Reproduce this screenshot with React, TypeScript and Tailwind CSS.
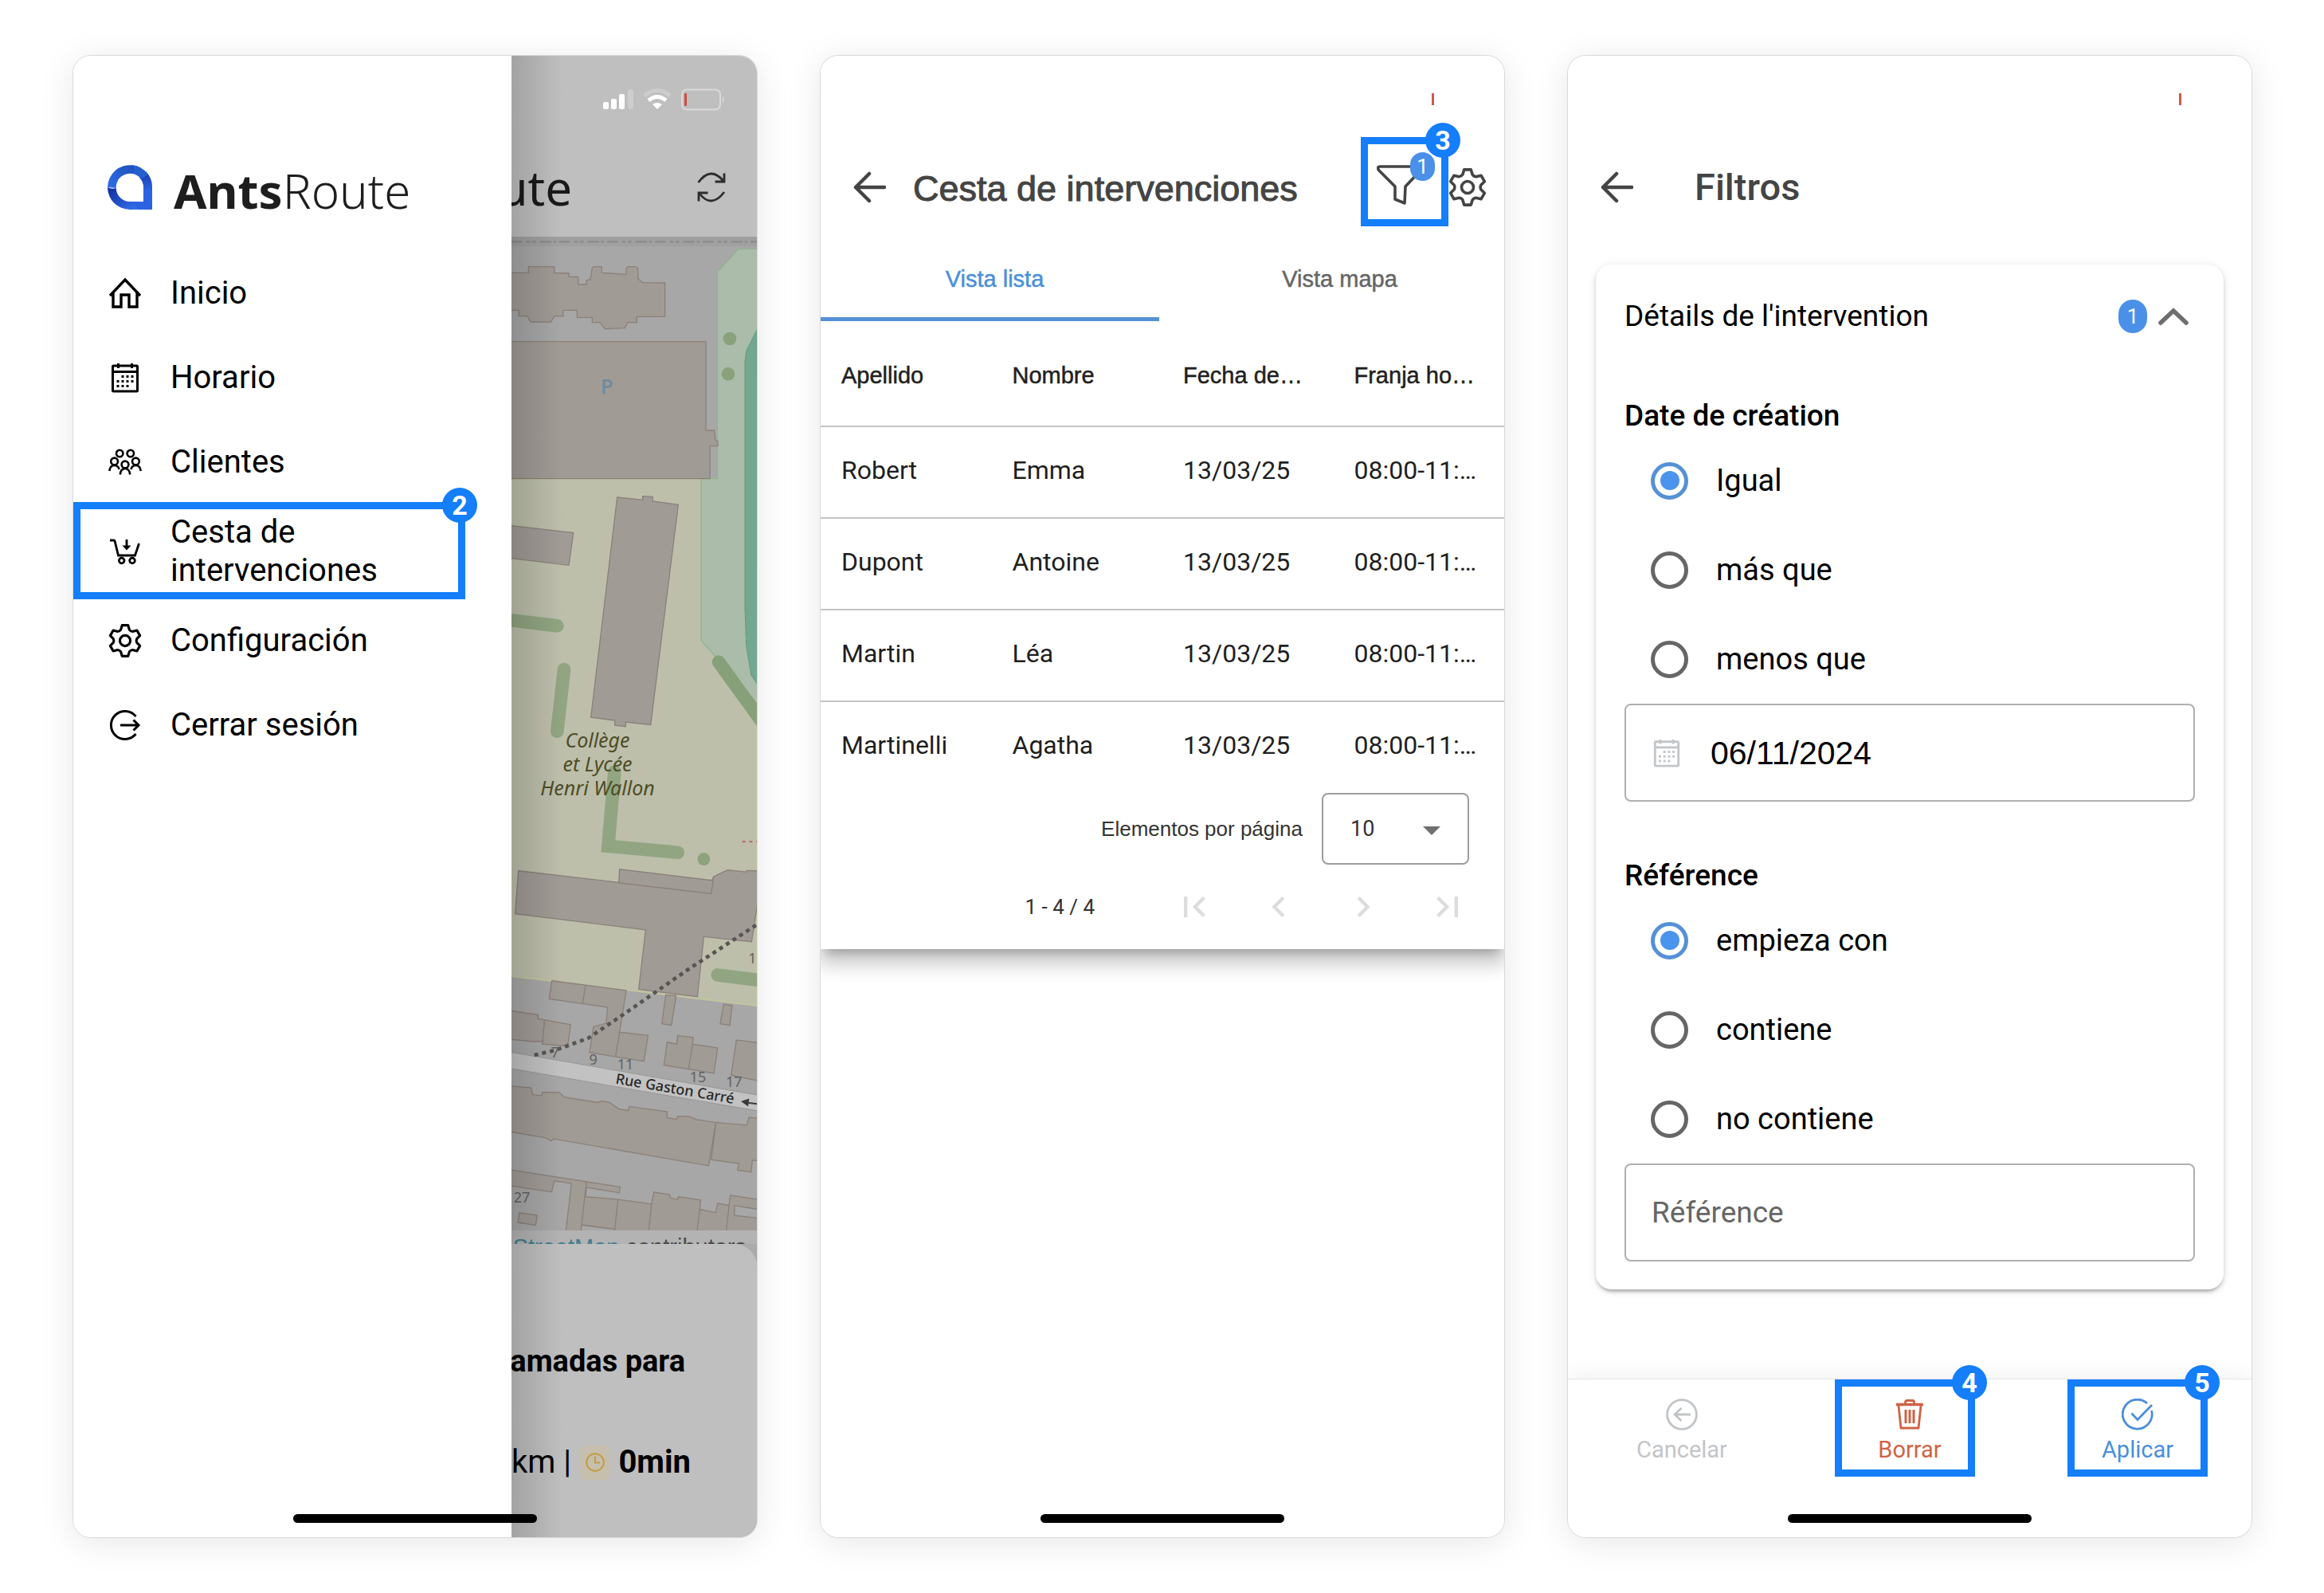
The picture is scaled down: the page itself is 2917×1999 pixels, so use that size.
// App.tsx
import type { ReactNode } from "react";
import clsx from "clsx";

const rows = [
  { apellido: "Robert", nombre: "Emma", fecha: "13/03/25", franja: "08:00-11:…" },
  { apellido: "Dupont", nombre: "Antoine", fecha: "13/03/25", franja: "08:00-11:…" },
  { apellido: "Martin", nombre: "Léa", fecha: "13/03/25", franja: "08:00-11:…" },
  { apellido: "Martinelli", nombre: "Agatha", fecha: "13/03/25", franja: "08:00-11:…" },
];

// Six-toothed gear outline centred on (24, 24)
const gearPath = (() => {
  const point = (radius: number, degrees: number) => {
    const a = (degrees * Math.PI) / 180;
    return `${(24 + radius * Math.cos(a)).toFixed(1)} ${(24 + radius * Math.sin(a)).toFixed(1)}`;
  };
  const teeth = [0, 1, 2, 3, 4, 5].map((i) => {
    const a = i * 60 - 90;
    return `${point(17, a - 21)}L${point(22.5, a - 11)}L${point(22.5, a + 11)}L${point(17, a + 21)}Q${point(15.5, a + 30)} `;
  });
  return `M${teeth.join("")}${point(17, -111)}Z`;
})();

function GearIcon({ className, width = 4 }: { className: string; width?: number }) {
  return (
    <svg viewBox="0 0 48 48" className={className} fill="none" stroke="currentColor" strokeWidth={width} strokeLinejoin="round">
      <path d={gearPath} />
      <circle cx="24" cy="24" r="7.5" />
    </svg>
  );
}

function HomeIcon() {
  return (
    <svg viewBox="0 0 40 40" className="w-10 h-10" fill="none" stroke="currentColor" strokeWidth="3.4">
      <path d="M1 23L20 3l19 20" />
      <path d="M5 19v18h10V22h10v15h10V19" />
    </svg>
  );
}

function CalendarIcon({ className }: { className: string }) {
  return (
    <svg viewBox="0 0 40 40" className={className} fill="none" stroke="currentColor">
      <rect x="4.5" y="5" width="31" height="32" rx="1" strokeWidth="3" />
      <path d="M4 12.5h32" strokeWidth="3" />
      <path d="M11.5 2v6M28.5 2v6" strokeWidth="3" />
      <path d="M15.5 18.5h15M9.5 24.5h21M9.5 30.5h15" strokeWidth="3.2" strokeDasharray="3 3" />
    </svg>
  );
}

function PeopleIcon() {
  return (
    <svg viewBox="0 0 42 34" className="w-[42px] h-[34px]" fill="none" stroke="currentColor" strokeWidth="2.6">
      <circle cx="14.2" cy="6" r="4.2" />
      <circle cx="27.8" cy="6" r="4.2" />
      <circle cx="7.6" cy="16" r="4.4" />
      <circle cx="34.4" cy="16" r="4.4" />
      <circle cx="21" cy="20" r="4.4" />
      <path d="M1.3 28c.5-4.5 2.7-7 6.3-7 3 0 5.2 1.8 6 5" />
      <path d="M40.7 28c-.5-4.5-2.7-7-6.3-7-3 0-5.2 1.8-6 5" />
      <path d="M14.8 32.5c.5-5 2.8-7.5 6.2-7.5s5.7 2.5 6.2 7.5" />
    </svg>
  );
}

function CartIcon() {
  return (
    <svg viewBox="0 0 40 40" className="w-10 h-10" fill="none" stroke="currentColor" strokeWidth="2.8">
      <path d="M1 6h4.5c1 0 1.5.5 1.7 1.4L11.5 25h21L37.5 10" />
      <circle cx="15.7" cy="31.5" r="3.3" />
      <circle cx="29" cy="31.5" r="3.3" />
      <path d="M22 5v9" />
      <path d="M16.5 12.5h11L22 18.5z" fill="currentColor" stroke="none" />
    </svg>
  );
}

function LogoutIcon() {
  return (
    <svg viewBox="0 0 40 40" className="w-10 h-10" fill="none" stroke="currentColor" strokeWidth="3">
      <path d="M33.5 9A17.5 17.5 0 1 0 33.5 31" />
      <path d="M14 20h23M30.5 13.5L37 20l-6.5 6.5" />
    </svg>
  );
}

function BackArrow() {
  return (
    <svg viewBox="0 0 42 40" className="w-[42px] h-10" fill="none" stroke="currentColor" strokeWidth="4.5">
      <path d="M40 20H4M21 3L4 20l17 17" strokeLinecap="round" strokeLinejoin="round" />
    </svg>
  );
}

function LogoMark() {
  return (
    <svg viewBox="0 0 56 56" className="w-14 h-14">
      <defs>
        <linearGradient id="markTop" x1="0" y1="1" x2="1" y2="0">
          <stop offset="0" stopColor="#2f6fe8" />
          <stop offset="1" stopColor="#1f50b8" />
        </linearGradient>
        <linearGradient id="markSide" x1="0" y1="0" x2="0" y2="1">
          <stop offset="0" stopColor="#173aa6" />
          <stop offset="0.5" stopColor="#2a62e2" />
          <stop offset="1" stopColor="#2a62e2" />
        </linearGradient>
        <linearGradient id="markBottom" x1="0" y1="0" x2="1" y2="1">
          <stop offset="0" stopColor="#0d2a9c" />
          <stop offset="1" stopColor="#3775ee" />
        </linearGradient>
      </defs>
      <path d="M56 56H33l-3-10h15V28A17 17 0 0 0 40 16l8-8a28 28 0 0 1 8 20z" fill="url(#markSide)" />
      <path d="M30 0A28 28 0 0 1 51 12l-9 5.5A17 17 0 0 0 31 11z" fill="#2560cf" />
      <path d="M0 28A28 28 0 0 1 32 0.5Q36 6 31 11A17.3 17.3 0 0 0 10.7 29z" fill="url(#markTop)" />
      <path d="M0 28q5 3 10.7 1A17.3 17.3 0 0 0 28 46h5q1 7 6 10H28A28 28 0 0 1 0 28z" fill="url(#markBottom)" />
    </svg>
  );
}

function StatusIcons() {
  return (
    <svg viewBox="0 0 154 28" className="w-[154px] h-7" fill="none">
      <rect x="0" y="17" width="7" height="9" rx="2" fill="#fff" />
      <rect x="10" y="13" width="7" height="13" rx="2" fill="#fff" />
      <rect x="20" y="7" width="7" height="19" rx="2" fill="#fff" />
      <rect x="31" y="1" width="7" height="25" rx="2" fill="#cdcdcd" />
      <path d="M52 9q16-13 32 0" stroke="#cdcdcd" strokeWidth="5" />
      <path d="M57 15q11-9 22 0" stroke="#fff" strokeWidth="5" />
      <path d="M62 20q6-4 12 0l-6 6z" fill="#fff" />
      <rect x="99" y="1.5" width="48" height="25" rx="6" stroke="#dadada" strokeWidth="2" />
      <path d="M150 10q4 4 0 8z" fill="#dadada" />
      <rect x="102" y="6" width="3" height="16" rx="1" fill="#cf4a40" />
    </svg>
  );
}

function RefreshIcon() {
  return (
    <svg viewBox="0 0 36 38" className="w-9 h-[38px]" fill="none" stroke="#2d2d2d" strokeWidth="2.8">
      <path d="M1.5 13Q17-8 33 11M34 1.5V12H22.5" />
      <path d="M34 25Q18 46 3 27M2 36.5V26H13.5" />
    </svg>
  );
}

// Numbered blue frame drawn over a control
function Highlight({ n, className }: { n: number; className: string }) {
  return (
    <span className={clsx("absolute border-[9px] border-[#147efb]", className)}>
      <span className="absolute -top-[27px] -right-6 w-11 h-11 rounded-full bg-[#147efb] flex items-center justify-center text-white text-[34px] leading-none font-bold font-[Roboto,sans-serif]">
        {n}
      </span>
    </span>
  );
}

function HomeIndicator() {
  return <div className="absolute bottom-[18px] left-1/2 -translate-x-1/2 w-[306px] h-[11px] rounded-full bg-black" />;
}

function Phone({ children }: { children: ReactNode }) {
  return (
    <section className="relative flex-1 min-w-0 flex rounded-[22px] shadow-[0_0_0_1px_#d9d9d9,0_6px_44px_rgba(0,0,0,0.1)]">
      <div className="flex-1 min-w-0 flex rounded-[22px] overflow-hidden bg-white">{children}</div>
      <HomeIndicator />
    </section>
  );
}

function StatusTick() {
  return (
    <div className="h-[102px] pt-[47px] pr-[88px] flex justify-end">
      <div className="w-[3px] h-[15px] bg-[#cf5a4e]" />
    </div>
  );
}

function CityMap() {
  return (
    <svg viewBox="36 0 924 3741" className="w-full block bg-[#a7a7a7]" fontFamily="'Noto Sans', sans-serif">
      <rect x="36" y="0" width="924" height="36" fill="#a0a0a0" />
      <path d="M36 19H960" stroke="#8a8a8a" strokeWidth="7" strokeDasharray="40 16 14 8 14 14 44 8 10 12" />
      <path d="M36 911H960V2895L36 2784z" fill="#bdbfab" stroke="#c3c59c" strokeWidth="5" />
      <path d="M890 47H962V1759L750 1519V911H811V133z" fill="#abbcab" stroke="#8fb48f" strokeWidth="4" />
      <path d="M960 351L920 431L915 471V1400L920 1539L938 1649L962 1685z" fill="#74a78f" stroke="#5f9c86" strokeWidth="3" />
      <g fill="#8aa27b">
        <circle cx="858" cy="384" r="25" />
        <circle cx="852" cy="517" r="25" />
      </g>
      <g fill="#a19b96" stroke="#8b8079" strokeWidth="4">
        <path d="M30 136H100V113H197V136L252 138V151H287V180H318V164L333 161L340 118Q342 113 350 113H376V136L468 142V120Q470 113 480 113H500Q512 114 513 125V158L530 173L614 174V301H508V323H474L462 344L388 347L368 323H340V304H283V277H231V299H198L184 321H108L96 299H64V277H30z" />
        <path d="M30 395H768V729H799L804 766L813 770V788H783V911H30z" />
      </g>
      <text x="395" y="590" textAnchor="middle" fontSize="78" fontWeight="600" fill="#6f8da0">P</text>

      <g transform="translate(0 969)">
        <g fill="#a19b96" stroke="#8b8079" strokeWidth="4">
          <path d="M30 118L269 146L252 268L30 241z" />
          <path d="M434 12L530 22V8L568 10V27L664 40L560 868L466 858V875L425 870V852L335 840z" />
        </g>
        <g fill="none" stroke="#91a582" strokeWidth="50" strokeLinecap="round">
          <path d="M20 473L208 496" />
          <path d="M234 660L208 893" />
          <path d="M816 632L985 865" stroke="#86a179" />
          <path d="M424 1045L400 1325L662 1349" />
        </g>
        <circle cx="760" cy="1374" r="24" fill="#8ca37d" />
        <path d="M905 1308H960" stroke="#b8706a" strokeWidth="7" strokeDasharray="12 14" />
        <g fontSize="75" fontStyle="italic" textAnchor="middle" fill="#4d4d25">
          <text x="360" y="955">Collège</text>
          <text x="360" y="1045">et Lycée</text>
          <text x="360" y="1133">Henri Wallon</text>
        </g>
      </g>

      <g transform="translate(0 2349)">
        <g fill="#a19b96" stroke="#8b8079" strokeWidth="4">
          <path d="M62 38L440 82L443 32L790 74L797 60L850 35L918 42L922 37L964 38V150L940 305L760 286L736 512L515 484L541 260L50 200z" />
          <path d="M437 83L788 124L797 60" fill="none" />
          <path d="M188 452L468 488L443 645L550 658L535 755L330 722L345 625L392 612L398 552L178 520z" />
          <path d="M315 470L303 540M443 645L428 735" />
          <path d="M30 564L136 580V595L259 617L247 698L152 690L155 680H110L30 672z" />
          <path d="M160 603L152 690" />
          <path d="M617 505L656 508L638 620L602 614z" />
          <path d="M835 540L867 545L858 620L822 614z" />
          <path d="M622 683L658 690L662 658L720 665L718 690L812 705L798 800L610 770z" />
          <path d="M718 690L703 783" />
          <path d="M883 675L964 685V828L863 808z" />
          <path d="M30 848L110 855L115 880L150 885L152 872H215L235 890L360 910L375 905L405 910L440 935L475 940L480 925L622 945V968L658 973L662 962H700L735 975L806 985L778 1148L195 1047L185 1055L165 1043L30 1020z" />
          <path d="M806 985L922 996L930 966L964 970V1130L943 1127L938 1172L887 1165L892 1140L788 1125z" />
          <path d="M30 1163L445 1228L442 1250L318 1230L315 1265L437 1275L563 1292L572 1248L630 1256L635 1270L660 1275L665 1265L748 1277L745 1312L805 1325L812 1290L855 1297L860 1260L964 1275V1400H240L262 1215L197 1205L187 1247L30 1223z" />
          <path d="M318 1210L300 1370L425 1387L437 1275M563 1292L553 1391M745 1312L735 1391M855 1297L845 1391" fill="none" />
          <path d="M875 1298L964 1312V1345L875 1335zM300 1372L425 1387V1400H298z" fill="#a7a7a7" />
          <path d="M66 1325L133 1335L127 1372L60 1362z" />
        </g>
        <path d="M812 430L985 452" stroke="#91a582" strokeWidth="50" strokeLinecap="round" />
        <path d="M30 720L964 882V942L30 782z" fill="#c2c2c2" stroke="#979797" strokeWidth="3" />
        <path d="M122 732L205 712L325 668L470 570L700 410L964 238" fill="none" stroke="#575553" strokeWidth="14" strokeDasharray="15 15" />
        <g fontSize="54" fill="#626262" textAnchor="middle">
          <text x="200" y="740">7</text>
          <text x="344" y="768">9</text>
          <text x="465" y="786">11</text>
          <text x="738" y="833">15</text>
          <text x="874" y="853">17</text>
          <text x="75" y="1287">27</text>
          <text x="943" y="388">1</text>
        </g>
        <text transform="translate(426 838) rotate(9.8)" fontSize="54" fontWeight="500" fill="#262626">Rue Gaston Carré</text>
        <path d="M925 911L964 916" stroke="#3a3a3a" strokeWidth="6" />
        <path d="M900 906L931 895L927 925z" fill="#3a3a3a" />
      </g>
    </svg>
  );
}

const menu = [
  { label: "Inicio", icon: <HomeIcon /> },
  { label: "Horario", icon: <CalendarIcon className="w-10 h-10" /> },
  { label: "Clientes", icon: <PeopleIcon /> },
  { label: "Cesta de intervenciones", icon: <CartIcon />, marker: 2 },
  { label: "Configuración", icon: <GearIcon className="w-[42px] h-[42px]" width={3.6} /> },
  { label: "Cerrar sesión", icon: <LogoutIcon /> },
];

function MenuScreen() {
  return (
    <Phone>
      <aside className="w-[64.1%] shrink-0 bg-white">
        <div className="pt-[137px] pl-[43px] h-[245px] flex items-start">
          <LogoMark />
          <div className="ml-[27px] text-[60px] leading-[64px] text-[#1e1e1e] font-['Noto_Sans',sans-serif]">
            <span className="font-bold">Ants</span>
            <span className="font-light">Route</span>
          </div>
        </div>
        <nav>
          {menu.map((item) => (
            <a
              key={item.label}
              href="#"
              className="relative min-h-[106px] py-[11px] pl-11 flex items-center text-[40px] leading-[48px] text-black"
            >
              <span className="w-[42px] flex justify-center shrink-0">{item.icon}</span>
              <span className="ml-9 max-w-[300px]">{item.label}</span>
              {item.marker && <Highlight n={item.marker} className="-top-[3px] -bottom-px left-0 right-[58px]" />}
            </a>
          ))}
        </nav>
      </aside>

      <div className="relative flex-1 min-w-0 flex flex-col overflow-hidden bg-[#bfbfbf]">
        <div className="h-[102px] pt-[41px] pr-[39px] flex justify-end">
          <StatusIcons />
        </div>
        <div className="h-[125px] pr-[39px] flex items-center justify-end">
          <span className="mr-[157px] text-[60px] leading-[60px] text-[#1a1a1a] font-['Noto_Sans',sans-serif]">Route</span>
          <button type="button" aria-label="Actualizar">
            <RefreshIcon />
          </button>
        </div>
        <CityMap />
        <div className="h-[17px] pt-[5px] pr-[13px] flex justify-end overflow-hidden whitespace-nowrap bg-[#b3b3b3] text-[29px] leading-8 text-[#4a4a4a] font-['Liberation_Sans',sans-serif]">
          <span>
            <a href="#" className="text-[#417d92]">StreetMap</a> contributors
          </span>
        </div>
        <div className="bg-[#aaaaaa] flex-1 flex">
          <div className="flex-1 min-w-0 rounded-tr-[28px] bg-[#bfbfbf] pt-[125px] text-black whitespace-nowrap">
            <p className="pr-[90px] flex justify-end text-[38px] leading-[44px] font-bold">programadas para</p>
            <p className="mt-[83px] pr-[83px] flex justify-end items-center text-[40px] leading-[44px]">
              km |
              <span className="w-[43px] h-[43px] ml-2.5 mr-2.5 rounded-lg bg-[#c6bfae] flex items-center justify-center">
                <svg viewBox="0 0 24 24" className="w-6 h-6" fill="none" stroke="#c59b42" strokeWidth="2">
                  <circle cx="12" cy="12" r="10.8" />
                  <path d="M12 4.5V12.5H18" />
                </svg>
              </span>
              <b>0min</b>
            </p>
          </div>
        </div>
        <div className="absolute inset-y-0 left-0 w-16 bg-linear-to-r from-black/15 to-transparent" />
      </div>
    </Phone>
  );
}

function PagerButton({ label, d }: { label: string; d: string }) {
  return (
    <button type="button" disabled aria-label={label} className="w-[106px] h-[106px] flex items-center justify-center">
      <svg viewBox="0 0 24 24" className="w-[52px] h-[52px]" fill="#dcdcdc">
        <path d={d} />
      </svg>
    </button>
  );
}

function ListScreen() {
  return (
    <Phone>
      <div className="flex-1 min-w-0 font-['Liberation_Sans',sans-serif]">
        <StatusTick />
        <header className="h-[126px] pl-10 pr-[22px] flex items-center text-[#444]">
          <button type="button" aria-label="Volver">
            <BackArrow />
          </button>
          <h1 className="ml-[34px] pt-1 text-[45px] leading-[52px] [-webkit-text-stroke:1px_#444]">Cesta de intervenciones</h1>
          <button
            type="button"
            aria-label="Filtrar"
            className="relative self-start ml-auto w-[110px] h-28 pt-2 pr-3 flex items-center justify-center"
          >
            <svg viewBox="0 0 58 50" className="w-[58px] h-[50px]" fill="none" stroke="currentColor" strokeWidth="3.6" strokeLinejoin="round">
              <path d="M4 2h49c3 0 4 3 2 5L36 27l-1 21-12-5V27L3 7C1 5 1 2 4 2z" />
            </svg>
            <span className="absolute right-[17px] top-[19px] w-[31px] h-9 rounded-full bg-[#4a90e8] text-white text-[26px] leading-9 font-[Roboto,sans-serif]">
              1
            </span>
            <Highlight n={3} className="inset-0" />
          </button>
          <button type="button" aria-label="Ajustes">
            <GearIcon className="w-12 h-[50px]" width={3.6} />
          </button>
        </header>

        <div className="bg-white shadow-[0_11px_11px_-7px_rgba(0,0,0,0.2),0_18px_22px_2px_rgba(0,0,0,0.14),0_7px_31px_4px_rgba(0,0,0,0.12)] [clip-path:inset(0_0_-80px_0)]">
          <div role="tablist" className="h-[105px] flex text-[29px]">
            <button
              type="button"
              role="tab"
              aria-selected
              className="flex-1 pt-1.5 pl-3 border-b-[5px] border-[#5591d6] text-[#4a90d9] [-webkit-text-stroke:0.5px_#4a90d9]"
            >
              Vista lista
            </button>
            <button
              type="button"
              role="tab"
              aria-selected={false}
              className="flex-1 pt-1.5 pl-5 border-b-[5px] border-transparent text-[#666] [-webkit-text-stroke:0.5px_#666]"
            >
              Vista mapa
            </button>
          </div>
          <table className="w-full table-fixed text-left whitespace-nowrap text-[#1f1f1f]">
            <thead>
              <tr className="h-[132px] text-[29px] border-b-2 border-[#c4c4c4]">
                {["Apellido", "Nombre", "Fecha de…", "Franja ho…"].map((title) => (
                  <th key={title} className="pt-1.5 pl-[26px] font-normal [-webkit-text-stroke:0.5px_#1f1f1f]">
                    {title}
                  </th>
                ))}
              </tr>
            </thead>
            <tbody className="text-[32px] font-[Roboto,sans-serif]">
              {rows.map((row, i) => (
                <tr key={row.apellido} className={clsx("h-[115px]", i < rows.length - 1 && "border-b-2 border-[#c4c4c4]")}>
                  <td className="pb-1.5 pl-[26px]">{row.apellido}</td>
                  <td className="pb-1.5 pl-[26px]">{row.nombre}</td>
                  <td className="pb-1.5 pl-[26px]">{row.fecha}</td>
                  <td className="pb-1.5 pl-[26px]">{row.franja}</td>
                </tr>
              ))}
            </tbody>
          </table>
          <div className="pr-[44px] flex items-center justify-end text-[26px] text-[#333]">
            <label htmlFor="page-size">Elementos por página</label>
            <div className="relative ml-6">
              <select
                id="page-size"
                defaultValue="10"
                className="appearance-none block w-[185px] h-[90px] pl-[34px] border-2 border-[#9e9e9e] rounded-lg bg-white text-[27px] font-[Roboto,sans-serif]"
              >
                <option>10</option>
              </select>
              <svg viewBox="0 0 22 11" className="absolute right-9 top-[42px] w-[22px] h-[11px] pointer-events-none" fill="#707070">
                <path d="M0 0h22L11 11z" />
              </svg>
            </div>
          </div>
          <div className="pr-[18px] flex items-center justify-end text-[26px] text-[#333]">
            <span className="mr-[72px] font-[Roboto,sans-serif]">1 - 4 / 4</span>
            <PagerButton label="Primera página" d="M18.41 16.59L13.82 12l4.59-4.59L17 6l-6 6 6 6zM6 6h2v12H6z" />
            <PagerButton label="Página anterior" d="M15.41 7.41L14 6l-6 6 6 6 1.41-1.41L10.83 12z" />
            <PagerButton label="Página siguiente" d="M10 6L8.59 7.41 13.17 12l-4.58 4.59L10 18l6-6z" />
            <PagerButton label="Última página" d="M5.59 7.41L10.18 12l-4.59 4.59L7 18l6-6-6-6zM16 6h2v12h-2z" />
          </div>
        </div>
      </div>
    </Phone>
  );
}

interface FilterGroupProps {
  name: string;
  legend: string;
  options: string[];
  children: ReactNode;
}

function FilterGroup({ name, legend, options, children }: FilterGroupProps) {
  return (
    <fieldset>
      <legend className="text-[37px] leading-[50px] font-medium">{legend}</legend>
      {options.map((option, i) => (
        <label key={option} className="h-28 pl-[33px] flex items-center gap-[35px] text-[38px]">
          <input
            type="radio"
            name={name}
            defaultChecked={i === 0}
            className="appearance-none shrink-0 w-[47px] h-[47px] rounded-full border-[5px] border-[#666] checked:border-[#5591d6] grid place-content-center before:w-6 before:h-6 before:rounded-full checked:before:bg-[#4a94ee]"
          />
          {option}
        </label>
      ))}
      {children}
    </fieldset>
  );
}

function FilterScreen() {
  return (
    <Phone>
      <div className="flex-1 min-w-0 flex flex-col text-black">
        <StatusTick />
        <header className="h-[126px] pl-10 flex items-center text-[#444]">
          <button type="button" aria-label="Volver">
            <BackArrow />
          </button>
          <h1 className="ml-[77px] text-[47px] leading-[52px] font-medium">Filtros</h1>
        </header>

        <div className="mt-[34px] mx-[35px] px-9 pb-[35px] rounded-[20px] bg-white shadow-[0_6px_4px_-4px_rgba(0,0,0,0.2),0_3px_5px_0_rgba(0,0,0,0.14),0_2px_12px_0_rgba(0,0,0,0.1)]">
          <button type="button" aria-expanded="true" className="w-full h-[130px] pr-2 flex items-center text-[37px]">
            Détails de l'intervention
            <span className="ml-auto w-9 h-[42px] rounded-full bg-[#4a90e8] text-white text-[26px] leading-[42px]">1</span>
            <svg viewBox="0 0 38 22" className="ml-[14px] w-[38px] h-[22px]" fill="none" stroke="#6e6e6e" strokeWidth="5.5" strokeLinecap="round">
              <path d="M3 19L19 4l16 15" />
            </svg>
          </button>
          <div className="pt-[35px] flex flex-col gap-[68px]">
            <FilterGroup name="creation" legend="Date de création" options={["Igual", "más que", "menos que"]}>
              <label className="h-[123px] pl-8 pr-4 flex items-center border-2 border-[#b0b0b0] rounded-lg">
                <CalendarIcon className="w-[38px] h-[38px] text-[#c3c6c9]" />
                <input
                  type="text"
                  aria-label="Date de création"
                  defaultValue="06/11/2024"
                  className="ml-9 flex-1 min-w-0 text-[41px] leading-[52px] font-['Liberation_Sans',sans-serif]"
                />
              </label>
            </FilterGroup>
            <FilterGroup name="reference" legend="Référence" options={["empieza con", "contiene", "no contiene"]}>
              <input
                type="text"
                aria-label="Référence"
                placeholder="Référence"
                className="block w-full h-[123px] px-8 border-2 border-[#b0b0b0] rounded-lg text-[37px] placeholder:text-[#666]"
              />
            </FilterGroup>
          </div>
        </div>

        <footer className="mt-auto h-[199px] flex justify-center items-start border-t border-[#e4e4e4] shadow-[0_-6px_24px_rgba(0,0,0,0.05)] text-[29px] leading-9">
          <div className="flex-1 flex justify-center">
            <button type="button" className="w-44 h-[122px] pt-6 flex flex-col items-center gap-1.5 text-[#c2c5c8]">
              <svg viewBox="0 0 40 40" className="w-10 h-10" fill="none" stroke="currentColor" strokeWidth="2.8">
                <circle cx="20" cy="20" r="18.4" />
                <path d="M31 20H11M19.5 12l-8.5 8 8.5 8" />
              </svg>
              Cancelar
            </button>
          </div>
          <div className="flex-1 flex justify-center">
            <button type="button" className="relative w-44 h-[122px] pt-6 flex flex-col items-center gap-1.5 text-[#cf6345]">
              <svg viewBox="0 0 40 40" className="w-10 h-10" fill="none" stroke="currentColor" strokeWidth="2.8">
                <path d="M3 7.5h34" strokeWidth="3.4" />
                <path d="M14.5 7V4.5q0-2 2-2h7q2 0 2 2V7" />
                <path d="M6 9l3 28h22l3-28" />
                <path d="M15 14v17M20 14v17M25 14v17" strokeWidth="3" />
              </svg>
              Borrar
              <Highlight n={4} className="inset-y-0 -left-1.5 right-1.5" />
            </button>
          </div>
          <div className="flex-1 flex justify-center">
            <button type="button" className="relative w-44 h-[122px] pt-6 flex flex-col items-center gap-1.5 text-[#4a8fda]">
              <svg viewBox="0 0 40 40" className="w-10 h-10" fill="none" stroke="currentColor" strokeWidth="2.8">
                <path d="M32 6A18.4 18.4 0 1 0 37.5 15" />
                <path d="M12.5 18.5l7.5 8L38 8" />
              </svg>
              Aplicar
              <Highlight n={5} className="inset-0" />
            </button>
          </div>
        </footer>
      </div>
    </Phone>
  );
}

export default function App() {
  return (
    <main className="min-h-screen pl-[92px] pr-[91px] py-[70px] flex gap-20 bg-white font-[Roboto,sans-serif]">
      <MenuScreen />
      <ListScreen />
      <FilterScreen />
    </main>
  );
}
